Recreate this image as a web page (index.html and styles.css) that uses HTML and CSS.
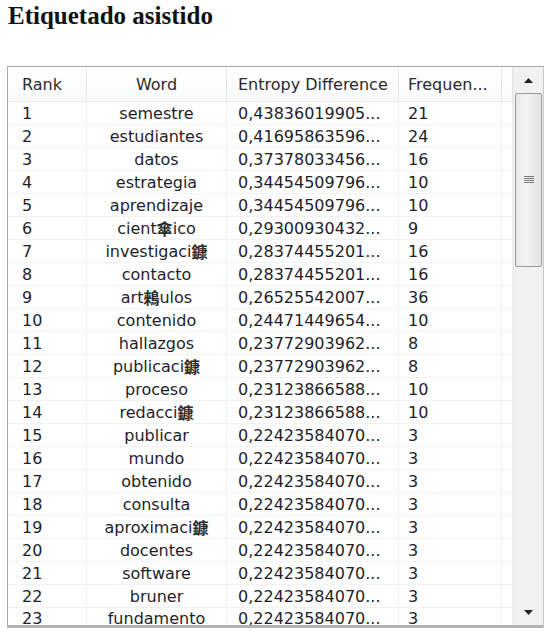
FILE: index.html
```html
<!DOCTYPE html>
<html>
<head>
<meta charset="utf-8">
<link rel="stylesheet" href="styles.css">
</head>
<body>
<h1 class="title">Etiquetado asistido</h1>
<div class="frame">
  <div class="grid-area">
    <div class="row head">
      <div class="c rank">Rank</div>
      <div class="c word">Word</div>
      <div class="c ent">Entropy Difference</div>
      <div class="c freq">Frequen...</div>
      <div class="c pad"></div>
    </div>
    <div class="row"><div class="c rank">1</div><div class="c word">semestre</div><div class="c ent">0,43836019905...</div><div class="c freq">21</div><div class="c pad"></div></div>
    <div class="row"><div class="c rank">2</div><div class="c word">estudiantes</div><div class="c ent">0,41695863596...</div><div class="c freq">24</div><div class="c pad"></div></div>
    <div class="row"><div class="c rank">3</div><div class="c word">datos</div><div class="c ent">0,37378033456...</div><div class="c freq">16</div><div class="c pad"></div></div>
    <div class="row"><div class="c rank">4</div><div class="c word">estrategia</div><div class="c ent">0,34454509796...</div><div class="c freq">10</div><div class="c pad"></div></div>
    <div class="row"><div class="c rank">5</div><div class="c word">aprendizaje</div><div class="c ent">0,34454509796...</div><div class="c freq">10</div><div class="c pad"></div></div>
    <div class="row"><div class="c rank">6</div><div class="c word">cient<span class="mj">傘</span>ico</div><div class="c ent">0,29300930432...</div><div class="c freq">9</div><div class="c pad"></div></div>
    <div class="row"><div class="c rank">7</div><div class="c word">investigaci<span class="mj">鏮</span></div><div class="c ent">0,28374455201...</div><div class="c freq">16</div><div class="c pad"></div></div>
    <div class="row"><div class="c rank">8</div><div class="c word">contacto</div><div class="c ent">0,28374455201...</div><div class="c freq">16</div><div class="c pad"></div></div>
    <div class="row"><div class="c rank">9</div><div class="c word">art<span class="mj">鶆</span>ulos</div><div class="c ent">0,26525542007...</div><div class="c freq">36</div><div class="c pad"></div></div>
    <div class="row"><div class="c rank">10</div><div class="c word">contenido</div><div class="c ent">0,24471449654...</div><div class="c freq">10</div><div class="c pad"></div></div>
    <div class="row"><div class="c rank">11</div><div class="c word">hallazgos</div><div class="c ent">0,23772903962...</div><div class="c freq">8</div><div class="c pad"></div></div>
    <div class="row"><div class="c rank">12</div><div class="c word">publicaci<span class="mj">鏮</span></div><div class="c ent">0,23772903962...</div><div class="c freq">8</div><div class="c pad"></div></div>
    <div class="row"><div class="c rank">13</div><div class="c word">proceso</div><div class="c ent">0,23123866588...</div><div class="c freq">10</div><div class="c pad"></div></div>
    <div class="row"><div class="c rank">14</div><div class="c word">redacci<span class="mj">鏮</span></div><div class="c ent">0,23123866588...</div><div class="c freq">10</div><div class="c pad"></div></div>
    <div class="row"><div class="c rank">15</div><div class="c word">publicar</div><div class="c ent">0,22423584070...</div><div class="c freq">3</div><div class="c pad"></div></div>
    <div class="row"><div class="c rank">16</div><div class="c word">mundo</div><div class="c ent">0,22423584070...</div><div class="c freq">3</div><div class="c pad"></div></div>
    <div class="row"><div class="c rank">17</div><div class="c word">obtenido</div><div class="c ent">0,22423584070...</div><div class="c freq">3</div><div class="c pad"></div></div>
    <div class="row"><div class="c rank">18</div><div class="c word">consulta</div><div class="c ent">0,22423584070...</div><div class="c freq">3</div><div class="c pad"></div></div>
    <div class="row"><div class="c rank">19</div><div class="c word">aproximaci<span class="mj">鏮</span></div><div class="c ent">0,22423584070...</div><div class="c freq">3</div><div class="c pad"></div></div>
    <div class="row"><div class="c rank">20</div><div class="c word">docentes</div><div class="c ent">0,22423584070...</div><div class="c freq">3</div><div class="c pad"></div></div>
    <div class="row"><div class="c rank">21</div><div class="c word">software</div><div class="c ent">0,22423584070...</div><div class="c freq">3</div><div class="c pad"></div></div>
    <div class="row"><div class="c rank">22</div><div class="c word">bruner</div><div class="c ent">0,22423584070...</div><div class="c freq">3</div><div class="c pad"></div></div>
    <div class="row last"><div class="c rank">23</div><div class="c word">fundamento</div><div class="c ent">0,22423584070...</div><div class="c freq">3</div><div class="c pad"></div></div>
  </div>
  <div class="vscroll">
    <div class="arrow up"><svg width="9" height="5" viewBox="0 0 9 5"><path d="M0 5 L4.5 0 L9 5 Z" fill="#222"/></svg></div>
    <div class="track">
      <div class="thumb"><span class="grip"></span></div>
    </div>
    <div class="arrow down"><svg width="9" height="5" viewBox="0 0 9 5"><path d="M0 0 L4.5 5 L9 0 Z" fill="#222"/></svg></div>
  </div>
</div>
</body>
</html>
```

FILE: styles.css
```css
html, body {
  margin: 0;
  padding: 0;
  background: #ffffff;
}
.title {
  margin: 0;
  padding: 2px 0 0 8px;
  height: 66px;
  box-sizing: border-box;
  font-family: "Liberation Serif", "Times New Roman", serif;
  font-weight: bold;
  font-size: 25px;
  line-height: 28px;
  color: #111;
}
.frame {
  margin-left: 7px;
  width: 537px;
  height: 562px;
  box-sizing: border-box;
  border-top: 1px solid #a8a8a8;
  border-left: 1px solid #a8a8a8;
  border-right: 1px solid #c8c8c8;
  border-bottom: 3px solid #b4b4b4;
  display: flex;
  overflow: hidden;
  background: #fff;
}
.grid-area {
  width: 505px;
  flex: none;
  overflow: hidden;
}
.row {
  display: flex;
  height: 23px;
  font-family: "DejaVu Sans", Verdana, sans-serif;
  font-size: 16px;
  color: #1e1e2a;
  border-bottom: 1px solid #f2f2f2;
  box-sizing: border-box;
}
.row.last {
  height: 21px;
}
.row.head {
  height: 35px;
  border-bottom: 1px solid #ececec;
  color: #2a2a2a;
  background: linear-gradient(#ffffff, #f9fafb);
}
.c {
  display: flex;
  align-items: center;
  box-sizing: border-box;
  border-right: 1px solid #f0f0f0;
  white-space: nowrap;
  overflow: hidden;
}
.head .c {
  border-right: 1px solid #e4e6ea;
}
.rank { width: 79px; padding-left: 14px; }
.word { width: 140px; justify-content: center; }
.ent { width: 172px; padding-left: 11px; }
.freq { width: 103px; padding-left: 9px; }
.pad { width: 11px; }
.mj {
  font-family: "Noto Sans CJK TC", "Noto Sans CJK SC", sans-serif;
  font-size: 16px;
  font-weight: bold;
  line-height: 1;
  color: #2a2a2a;
}
.vscroll {
  width: 30px;
  flex: none;
  display: flex;
  flex-direction: column;
  background: #f1f1f1;
  border-left: 1px solid #ebebeb;
  box-sizing: border-box;
}
.arrow {
  height: 26px;
  display: flex;
  align-items: center;
  justify-content: center;
  flex: none;
}
.track {
  flex: 1;
  padding: 0 1px;
}
.thumb {
  height: 174px;
  box-sizing: border-box;
  border: 1px solid #9a9a9a;
  border-radius: 2px;
  background: linear-gradient(90deg, #e6e6e6, #f4f4f4 40%, #e2e2e2);
  display: flex;
  align-items: center;
  justify-content: center;
}
.grip {
  width: 10px;
  height: 8px;
  background: repeating-linear-gradient(#7a7a7a 0 1px, transparent 1px 2px);
}
```
